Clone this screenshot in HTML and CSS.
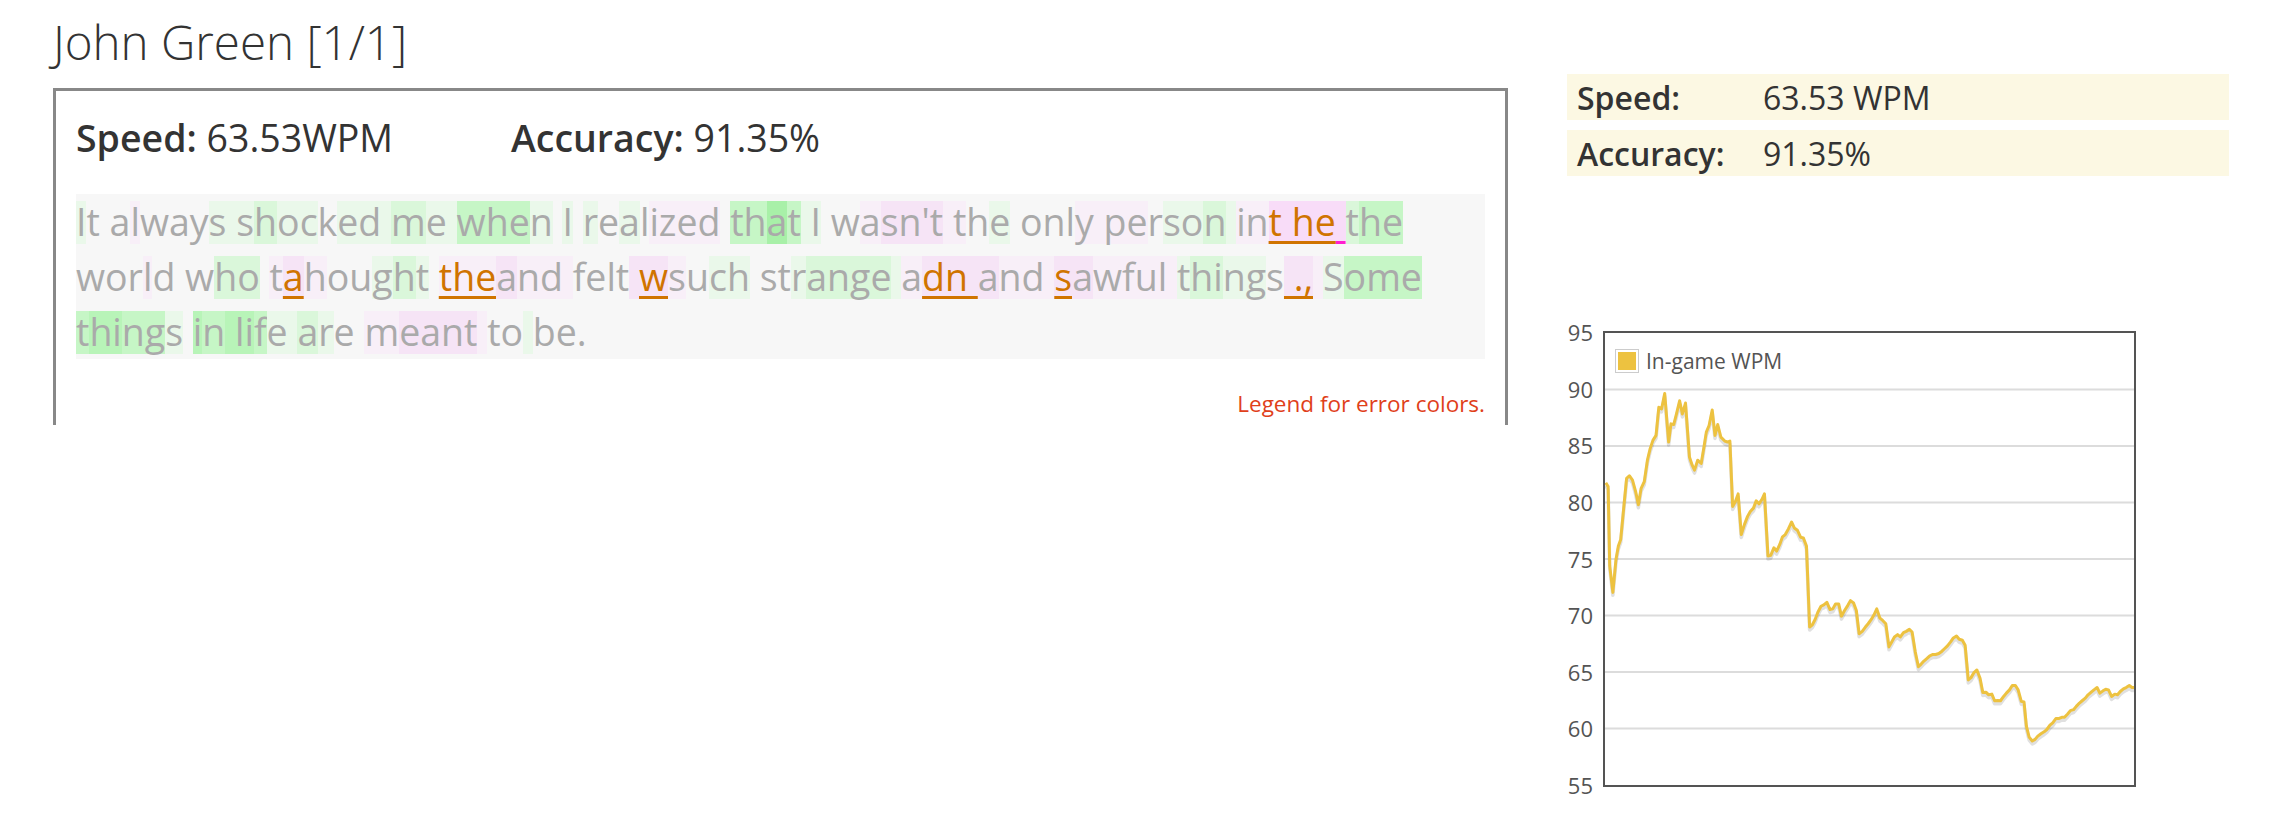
FILE: index.html
```html
<!DOCTYPE html>
<html lang="en">
<head>
<meta charset="utf-8">
<title>John Green [1/1]</title>
<link rel="stylesheet" href="styles.css">
</head>
<body>
<div class="page">
  <div class="main">
    <h1 class="title">John Green [1/1]</h1>
    <div class="panel">
      <div class="stats">
        <div class="stat"><b>Speed:</b> 63.53WPM</div>
        <div class="stat"><b>Accuracy:</b> 91.35%</div>
      </div>
      <div class="typed">
<div class="line"><span class="gA">I</span>t a<span class="pA">l</span>way<span class="gA">s s</span><span class="gB">h</span><span class="gA">oc</span>k<span class="gA">ed </span><span class="gB">m</span><span class="gA">e </span><span class="gC">whe</span><span class="gA">n</span> <span class="gA">I</span> <span class="gA">r</span>e<span class="gA">a</span>l<span class="pA">ized</span> <span class="gC">th</span><span class="gE">a</span><span class="gC">t</span><span class="gA"> I</span> w<span class="pA">a</span><span class="pB">sn't</span><span class="pA"> t</span>h<span class="gA">e</span> onl<span class="pA">y pe</span>r<span class="gA">so</span><span class="gB">n</span><span class="gA"> </span><span class="pA">in</span><span class="err pC">t he</span><span class="err mag pC"> </span><span class="gB">t</span><span class="gC">he</span></div>
<div class="line">wor<span class="pA">l</span>d w<span class="gB">ho</span> <span class="pA">t</span><span class="err pB">a</span><span class="pA">h</span>ou<span class="gA">g</span><span class="gB">h</span><span class="gA">t</span> <span class="err pA">the</span><span class="pB">a</span><span class="pA">nd </span>felt<span class="pB"> </span><span class="err pB">w</span><span class="pA">s</span>u<span class="gA">ch</span> st<span class="gA">r</span><span class="gB">ange</span><span class="gA"> </span><span class="pA">a</span><span class="err pB">dn </span><span class="pB">a</span><span class="pA">nd </span><span class="err pB">s</span><span class="pB">a</span><span class="pA">wful </span><span class="gA">t</span><span class="gB">hi</span><span class="gA">ng</span>s<span class="err pB"> .,</span><span class="pA"> </span><span class="gA">S</span><span class="gC">ome</span></div>
<div class="line"><span class="gC">t</span><span class="gD">hi</span><span class="gC">ng</span><span class="gA">s</span> <span class="gD">i</span><span class="gC">n</span><span class="gD"> li</span><span class="gC">f</span><span class="gA">e </span><span class="gB">a</span><span class="gA">r</span>e <span class="pA">m</span><span class="pB">eant</span><span class="pA"> </span>to<span class="gA"> </span>be.</div>
      </div>
      <div class="legend-link">Legend for error colors.</div>
    </div>
  </div>
  <div class="side">
    <div class="summary">
      <div class="row"><span class="lbl">Speed:</span><span>63.53 WPM</span></div>
      <div class="row"><span class="lbl">Accuracy:</span><span>91.35%</span></div>
    </div>
    <div class="chart">
      <div class="yaxis">
        <span>95</span><span>90</span><span>85</span><span>80</span><span>75</span><span>70</span><span>65</span><span>60</span><span>55</span>
      </div>
      <div class="plot">
        <svg viewBox="210 95 1347 1368" preserveAspectRatio="none">
          <g class="grid">
            <line x1="210" x2="1557" y1="266" y2="266"/>
            <line x1="210" x2="1557" y1="437" y2="437"/>
            <line x1="210" x2="1557" y1="608" y2="608"/>
            <line x1="210" x2="1557" y1="779" y2="779"/>
            <line x1="210" x2="1557" y1="950" y2="950"/>
            <line x1="210" x2="1557" y1="1121" y2="1121"/>
            <line x1="210" x2="1557" y1="1292" y2="1292"/>
          </g>
          <polyline class="shadow" transform="translate(0,9)" points="212,548 218,560 222,800 230,880 238,780 244,740 250,720 258,620 265,535 272,527 280,540 288,575 295,615 302,565 310,545 318,480 325,445 332,420 340,405 347,320 354,325 362,278 372,425 378,370 385,372 392,340 400,300 407,340 415,307 425,470 432,495 438,510 446,480 455,490 462,440 468,395 475,375 483,328 490,405 497,372 505,410 515,422 522,425 528,422 535,620 542,605 549,582 557,705 565,675 573,650 580,635 588,625 595,603 602,612 610,598 616,582 625,770 632,768 640,745 647,755 655,735 662,712 669,705 677,688 685,667 692,685 700,692 708,713 715,715 723,740 731,985 738,978 745,962 752,940 760,922 767,918 775,910 783,932 790,930 797,915 805,915 812,952 820,935 828,920 835,905 843,912 850,935 857,1005 865,998 873,985 880,975 888,962 895,948 902,930 910,958 917,965 925,975 933,1045 940,1030 947,1015 955,1008 962,1015 970,1002 977,998 985,992 992,1000 1000,1060 1008,1105 1015,1097 1022,1088 1030,1080 1037,1072 1045,1068 1052,1068 1060,1065 1068,1058 1075,1050 1082,1042 1090,1030 1097,1018 1105,1012 1112,1022 1120,1025 1127,1040 1135,1145 1142,1138 1150,1122 1157,1115 1165,1140 1172,1183 1180,1182 1187,1190 1195,1188 1202,1208 1210,1207 1217,1208 1225,1195 1232,1185 1240,1175 1247,1162 1255,1162 1262,1175 1270,1210 1277,1212 1283,1285 1290,1318 1298,1330 1305,1325 1312,1315 1320,1308 1328,1302 1335,1295 1343,1282 1350,1275 1358,1262 1365,1262 1373,1258 1380,1258 1388,1248 1395,1238 1403,1235 1410,1225 1418,1215 1425,1208 1433,1200 1440,1190 1448,1182 1455,1175 1463,1168 1470,1185 1478,1178 1485,1173 1492,1175 1500,1195 1508,1188 1515,1190 1522,1180 1530,1172 1537,1168 1545,1162 1552,1168 1557,1168"/>
          <polyline class="series" points="212,548 218,560 222,800 230,880 238,780 244,740 250,720 258,620 265,535 272,527 280,540 288,575 295,615 302,565 310,545 318,480 325,445 332,420 340,405 347,320 354,325 362,278 372,425 378,370 385,372 392,340 400,300 407,340 415,307 425,470 432,495 438,510 446,480 455,490 462,440 468,395 475,375 483,328 490,405 497,372 505,410 515,422 522,425 528,422 535,620 542,605 549,582 557,705 565,675 573,650 580,635 588,625 595,603 602,612 610,598 616,582 625,770 632,768 640,745 647,755 655,735 662,712 669,705 677,688 685,667 692,685 700,692 708,713 715,715 723,740 731,985 738,978 745,962 752,940 760,922 767,918 775,910 783,932 790,930 797,915 805,915 812,952 820,935 828,920 835,905 843,912 850,935 857,1005 865,998 873,985 880,975 888,962 895,948 902,930 910,958 917,965 925,975 933,1045 940,1030 947,1015 955,1008 962,1015 970,1002 977,998 985,992 992,1000 1000,1060 1008,1105 1015,1097 1022,1088 1030,1080 1037,1072 1045,1068 1052,1068 1060,1065 1068,1058 1075,1050 1082,1042 1090,1030 1097,1018 1105,1012 1112,1022 1120,1025 1127,1040 1135,1145 1142,1138 1150,1122 1157,1115 1165,1140 1172,1183 1180,1182 1187,1190 1195,1188 1202,1208 1210,1207 1217,1208 1225,1195 1232,1185 1240,1175 1247,1162 1255,1162 1262,1175 1270,1210 1277,1212 1283,1285 1290,1318 1298,1330 1305,1325 1312,1315 1320,1308 1328,1302 1335,1295 1343,1282 1350,1275 1358,1262 1365,1262 1373,1258 1380,1258 1388,1248 1395,1238 1403,1235 1410,1225 1418,1215 1425,1208 1433,1200 1440,1190 1448,1182 1455,1175 1463,1168 1470,1185 1478,1178 1485,1173 1492,1175 1500,1195 1508,1188 1515,1190 1522,1180 1530,1172 1537,1168 1545,1162 1552,1168 1557,1168"/>
        </svg>
        <div class="plot-legend"><span class="swatch"><i></i></span><span>In-game WPM</span></div>
      </div>
    </div>
  </div>
</div>
</body>
</html>
```

FILE: styles.css
```css
body {
  margin: 0;
  background: #fff;
  color: #333;
  font-family: "Open Sans", "Liberation Sans", sans-serif;
}

.page {
  display: flex;
  align-items: flex-start;
  gap: 59px;
  padding: 10px 0 0 53px;
}

.main {
  width: 1455px;
}

.title {
  margin: 0 0 15px;
  font-size: 47.5px;
  font-weight: 300;
  line-height: 63px;
  color: #333;
}

.panel {
  border: 3px solid #888;
  border-bottom: 0;
  padding: 20px 20px 6px;
}

.stats {
  display: flex;
  font-size: 37.5px;
  line-height: 53px;
  color: #333;
}

.stat {
  width: 435px;
}

.stat b {
  font-weight: 600;
}

.typed {
  margin-top: 30px;
  background: #f7f7f7;
  font-size: 37.5px;
  color: #aaa;
}

.line {
  height: 55px;
  line-height: 55px;
  white-space: pre;
}

.gA, .gB, .gC, .gD, .gE, .pA, .pB, .pC {
  background-image: linear-gradient(var(--c), var(--c));
  background-size: 100% 43px;
  background-position: 0 5px;
  background-repeat: no-repeat;
}

.gA { --c: #eaf8ea; }
.gB { --c: #daf7da; }
.gC { --c: #c6f6c6; }
.gD { --c: #b8f4b8; }
.gE { --c: #a8f0a8; }
.pA { --c: #f8eff8; }
.pB { --c: #f6e4f6; }
.pC { --c: #f8dcf8; }

.err {
  color: #d07400;
  text-decoration: underline;
  text-decoration-color: #d07400;
  text-decoration-thickness: 3px;
  text-underline-offset: 5px;
  text-decoration-skip-ink: none;
}

.err.mag {
  text-decoration-color: #ff1fcf;
}

.legend-link {
  margin-top: 29px;
  text-align: right;
  font-size: 22.5px;
  color: #e0401a;
}

.side {
  width: 662px;
  padding-top: 64px;
}

.summary {
  display: flex;
  flex-direction: column;
  gap: 10px;
}

.row {
  display: flex;
  align-items: center;
  height: 46px;
  padding-left: 10px;
  background: #fcf8e3;
  font-size: 32px;
  color: #333;
}

.lbl {
  width: 186px;
  font-weight: 600;
}

.chart {
  display: flex;
  align-items: flex-start;
  gap: 10px;
  margin-top: 155px;
}

.yaxis {
  width: 26px;
  height: 473px;
  margin-top: -9px;
  display: flex;
  flex-direction: column;
  justify-content: space-between;
  align-items: flex-end;
  font-size: 22px;
  line-height: 20px;
  color: #545454;
}

.plot {
  position: relative;
  width: 533px;
  height: 456px;
  box-sizing: border-box;
  border: 2px solid #545454;
}

.plot svg {
  display: block;
  width: 100%;
  height: 100%;
}

.grid line {
  stroke: #dcdcdc;
  stroke-width: 2;
  vector-effect: non-scaling-stroke;
}

.series {
  fill: none;
  stroke: #edc240;
  stroke-width: 3;
  stroke-linejoin: round;
  vector-effect: non-scaling-stroke;
}

.shadow {
  fill: none;
  stroke: rgba(0, 0, 0, 0.12);
  stroke-width: 3.5;
  stroke-linejoin: round;
  vector-effect: non-scaling-stroke;
}

.plot-legend {
  position: absolute;
  left: 10px;
  top: 14px;
  display: flex;
  align-items: center;
  gap: 7px;
  font-size: 21px;
  color: #545454;
}

.swatch {
  display: block;
  padding: 2px;
  border: 1px solid #ccc;
}

.swatch i {
  display: block;
  width: 18px;
  height: 18px;
  background: #edc240;
}
```
